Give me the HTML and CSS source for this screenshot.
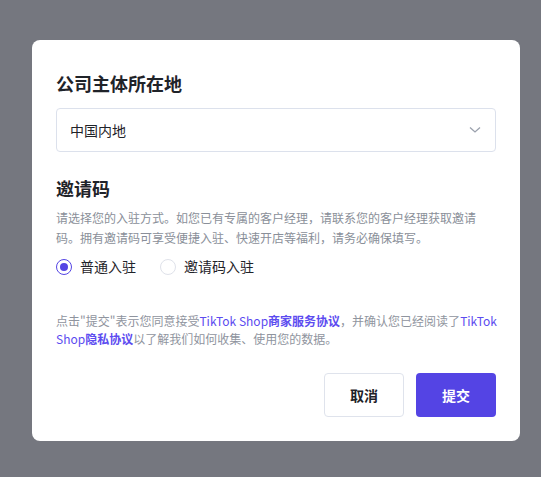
FILE: index.html
```html
<!DOCTYPE html>
<html lang="zh-CN">
<head>
<meta charset="utf-8">
<link rel="stylesheet" href="styles.css">
</head>
<body>
<div class="overlay">
  <div class="modal">
    <h2 class="title">公司主体所在地</h2>
    <div class="select">
      <span class="select-value">中国内地</span>
      <svg class="chevron" width="12" height="8" viewBox="0 0 12 8"><path d="M1 1.5 L6 6 L11 1.5" fill="none" stroke="#9ba1ad" stroke-width="1.3"/></svg>
    </div>
    <h2 class="title title-second">邀请码</h2>
    <p class="desc">请选择您的入驻方式。如您已有专属的客户经理，请联系您的客户经理获取邀请码。拥有邀请码可享受便捷入驻、快速开店等福利，请务必确保填写。</p>
    <div class="radios">
      <label class="radio"><span class="circle checked"></span><span>普通入驻</span></label>
      <label class="radio"><span class="circle"></span><span>邀请码入驻</span></label>
    </div>
    <p class="terms">点击"提交"表示您同意接受<span class="link">TikTok Shop</span><b class="link">商家服务协议</b>，并确认您已经阅读了<span class="link">TikTok Shop</span><b class="link">隐私协议</b>以了解我们如何收集、使用您的数据。</p>
    <div class="actions">
      <button class="btn btn-cancel">取消</button>
      <button class="btn btn-primary">提交</button>
    </div>
  </div>
</div>
</body>
</html>
```

FILE: styles.css
```css
html, body {
  margin: 0;
  padding: 0;
  height: 100%;
}
body {
  background: #75777f;
  font-family: Inter, "Noto Sans CJK SC", sans-serif;
  color: #1f2329;
}
.overlay {
  padding: 40px 0 0 32px;
}
.modal {
  width: 488px;
  box-sizing: border-box;
  background: #fff;
  border-radius: 8px;
  padding: 32px 24px 24px;
}
.title {
  margin: 0;
  font-size: 18px;
  line-height: 26px;
  font-weight: 700;
  color: #1f2329;
}
.title-second {
  margin-top: 25px;
}
.select {
  margin-top: 10px;
  height: 44px;
  box-sizing: border-box;
  border: 1px solid #dce1ec;
  border-radius: 4px;
  display: flex;
  align-items: center;
  justify-content: space-between;
  padding: 0 14px 0 13px;
}
.select-value {
  font-size: 14px;
  color: #1f2329;
}
.chevron {
  display: block;
}
.desc {
  margin: 6px 0 0;
  max-width: 425px;
  font-size: 12px;
  line-height: 20px;
  color: #8a8f99;
}
.radios {
  margin-top: 8px;
  display: flex;
  gap: 24px;
  height: 20px;
  align-items: center;
}
.radio {
  display: flex;
  align-items: center;
  gap: 8px;
  font-size: 14px;
  line-height: 20px;
  color: #1f2329;
}
.circle {
  width: 16px;
  height: 16px;
  box-sizing: border-box;
  border-radius: 50%;
  border: 1px solid #dfe2ea;
  display: flex;
  align-items: center;
  justify-content: center;
}
.circle.checked {
  border: 1.5px solid #5444e4;
}
.circle.checked::after {
  content: "";
  width: 8px;
  height: 8px;
  border-radius: 50%;
  background: #5444e4;
}
.terms {
  margin: 35px -10px 0 0;
  font-family: "Noto Sans CJK SC", sans-serif;
  font-size: 12px;
  line-height: 18px;
  color: #8f949e;
}
.link {
  color: #5c4cf0;
}
b.link {
  font-weight: 700;
}
.actions {
  margin-top: 25px;
  display: flex;
  justify-content: flex-end;
  gap: 12px;
}
.btn {
  width: 80px;
  height: 44px;
  border-radius: 4px;
  font-family: Inter, "Noto Sans CJK SC", sans-serif;
  font-size: 14px;
  font-weight: 700;
  cursor: pointer;
}
.btn-cancel {
  background: #fff;
  border: 1px solid #dfe3ec;
  color: #1f2329;
}
.btn-primary {
  background: #5444e4;
  border: none;
  color: #fff;
}
```
